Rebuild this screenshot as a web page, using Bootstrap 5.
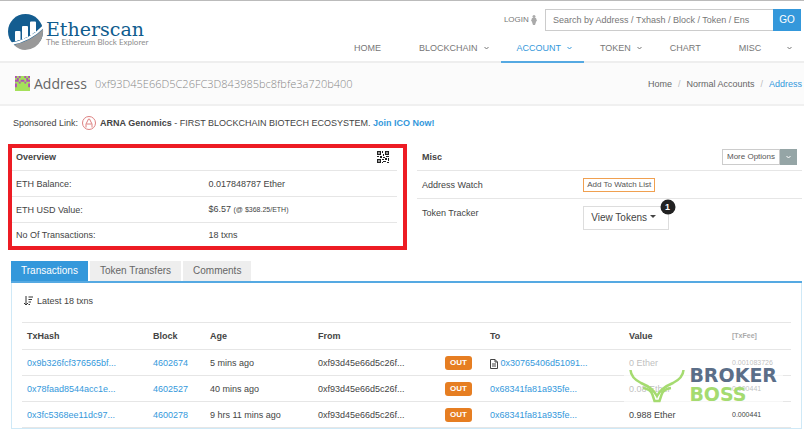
<!DOCTYPE html>
<html lang="en">
<head>
<meta charset="utf-8">
<meta name="viewport" content="width=device-width, initial-scale=1">
<title>Etherscan - Address</title>
<link rel="stylesheet" href="https://cdn.jsdelivr.net/npm/bootstrap@5.3.0/dist/css/bootstrap.min.css">
<style>
body{font-family:"Liberation Sans",Arial,sans-serif;font-size:9px;line-height:14px;color:#444;background:#fff;overflow-x:hidden}
a{color:#3498db;text-decoration:none}
.site-head{border-top:1px solid #bbb;border-bottom:2px solid #eee;min-height:63px}
.brand-text{padding:11px 0 0 2px}
.brand-name{font:19px/18px "DejaVu Serif",serif;color:#0f5c8e}
.brand-tag{font:8px/8px Lato,sans-serif;color:#8c8c8c}
.head-side{width:466px}
.head-tools{padding:8px 3px 0 0}
.login{color:#777;font-size:8px}
.search{width:256px}
.search input{font-size:9px;line-height:14px;height:22px;padding:0 7px;border:1px solid #ccc;border-radius:0;color:#777}
.search input::placeholder{color:#777;opacity:1}
.go{font-size:10px;line-height:14px;width:28px;padding:0;background:#3498db;color:#fff;border-radius:0}
.menu a{font-size:9px;line-height:14px;color:#777;padding:9px 12px 6px 16px;border-bottom:2px solid transparent;margin-bottom:-2px;display:flex;align-items:center;gap:6px}
.menu .plain{padding-right:22px}
.menu a.current{color:#3498db;border-color:#55a9e2}
.strip{background:#fbfbfb;border-bottom:2px solid #f0f0f0;min-height:43px;padding:0 2px 0 15px}
.strip h1{font:14px/20px "Open Sans",sans-serif;color:#666}
.strip .hash{font:300 11px/20px "Open Sans",sans-serif;color:#888}
.crumbs a{color:#666}
.crumbs .breadcrumb-item+.breadcrumb-item{padding-left:6px}
.crumbs .breadcrumb-item+.breadcrumb-item::before{padding-right:6px;color:#bbb}
.crumbs .active{color:#3498db}
.sponsor{padding:10px 13px 14px}
.summary{padding-left:8px;padding-right:2px}
.overview{border:4px solid #ed1c24;padding-right:6px;margin-right:-2px}
.line{border-top:1px solid #e6e6e6;min-height:26px;padding:0 4px}
.overview .line:last-child{min-height:24px}
.overview .line.first{border-top:0;min-height:22px;padding-bottom:4px}
.misc{padding-left:12px}
.misc .line{min-height:28px;padding:0 5px}
.misc .line.first{border-top:0;min-height:26px}
.misc .line.tracker{padding-top:7px}
.misc-label{width:43%}
.tiny{font-size:7px}
.opt{font-size:8px;line-height:12px;padding:1px 4px;border:1px solid #ccc;border-radius:0;color:#555;background:#fff}
.opt-arrow{background:#95a5a6;border-color:#95a5a6;width:17px}
.watch{border:1px solid #f0a050;border-radius:0;font-size:8px;line-height:12px;padding:0 3px;color:#555;background:#fff}
.tokens{border:1px solid #ddd;border-radius:0;font-size:10px;line-height:14px;padding:4px 12px 4px 7px;color:#444;background:#fff}
.count{font-size:9px;line-height:15px;width:15px;height:15px;padding:0;background:#222}
.history{padding:11px 2px 0 11px}
.tabs{border-bottom:2px solid #55a9e2;gap:2px}
.tabs .nav-link{border:0;border-radius:0;font-size:10px;line-height:14px;padding:3px 10px;color:#666;background:#eee}
.tabs .nav-link.active{background:#3498db;color:#fff}
.panel{border:1px solid #cfe9f7;border-top:0;padding:11px 10px 0}
.latest{padding-left:2px;margin-bottom:14px}
.tx{table-layout:fixed;font-size:9px;line-height:14px;margin:0}
.tx th,.tx td{padding:6px 0 5px 5px;border:0;border-top:1px solid #e6e6e6;border-bottom:1px solid #e6e6e6;white-space:nowrap;color:#444;background:transparent;overflow:hidden}
.tx th{padding-bottom:6px}
.w-hash{width:126px}.w-block{width:57px}.w-age{width:108px}.w-from{width:127px}.w-dir{width:45px}.w-to{width:139px}.w-val{width:103px}
.tx .fee{font-size:7px}
.tx th.fee{color:#aaa}
.out{font-size:8px;line-height:14px;padding:0 5px;border-radius:3px;background:#e67e22;vertical-align:top}
.boss{top:72px;right:18px;background:rgba(255,255,255,.65);padding:11px 6px 0 5px;gap:4px;font:700 19px/19px "DejaVu Sans",sans-serif}
.boss svg{margin-top:3px}
.navy{color:#5b6e88}
.lime{color:#a5db70}
</style>
</head>
<body>
<header class="site-head d-flex justify-content-between">
  <a href="#" class="d-flex align-items-start ps-2 pt-2">
    <svg class="mt-1" width="36" height="38" viewBox="0 0 36 38"><circle cx="17.500" cy="18.500" r="17.500" fill="#145d90"/><path d="M6 32Q25 27 35 16Q36 27 27 34Q15 41 6 32" fill="#999"/><path d="M2 31Q22 28 36 13" stroke="#fff" stroke-width="2.500" fill="none"/><path d="M8 28V19h3.500v8M15 26V14h4v10M23 22V9.500h4V19" stroke="#fff" fill="#fff" stroke-width="2" stroke-linejoin="round"/></svg>
    <span class="brand-text"><span class="brand-name d-block">Etherscan</span><span class="brand-tag d-block">The Ethereum Block Explorer</span></span>
  </a>
  <div class="head-side d-flex flex-column justify-content-between">
    <div class="head-tools d-flex justify-content-end align-items-center">
      <a href="#" class="login me-2">LOGIN <svg width="6" height="10" viewBox="0 0 6 10" fill="#aaa"><circle cx="3" cy="1.500" r="1.500"/><path d="M1 3h4l1 3-1 .5V7L4 10H2L1 7V6.500L0 6z"/></svg></a>
      <form class="search input-group flex-nowrap"><input class="form-control" type="text" aria-label="Search" placeholder="Search by Address / Txhash / Block / Token / Ens"><button class="btn go" type="button">GO</button></form>
    </div>
    <nav class="menu d-flex">
      <a href="#" class="plain">HOME</a>
      <a href="#">BLOCKCHAIN <svg width="5" height="4" viewBox="0 0 5 4"><path d="M.5 1l2 2 2-2" stroke="currentColor" fill="none"/></svg></a>
      <a href="#" class="current">ACCOUNT <svg width="5" height="4" viewBox="0 0 5 4"><path d="M.5 1l2 2 2-2" stroke="currentColor" fill="none"/></svg></a>
      <a href="#">TOKEN <svg width="5" height="4" viewBox="0 0 5 4"><path d="M.5 1l2 2 2-2" stroke="currentColor" fill="none"/></svg></a>
      <a href="#" class="plain">CHART</a>
      <a href="#" class="flex-grow-1 justify-content-between">MISC <svg width="5" height="4" viewBox="0 0 5 4"><path d="M.5 1l2 2 2-2" stroke="currentColor" fill="none"/></svg></a>
    </nav>
  </div>
</header>
<section class="strip d-flex align-items-center justify-content-between">
  <div class="d-flex align-items-center">
    <svg width="15" height="15" viewBox="0 0 8 8"><path d="M0 0h8v8H0z" fill="#a5e05a"/><path d="M0 0h1v1H0zM2 0h1v1H2zM5 0h1v1H5zM7 0h1v1H7zM0 2h2v1H0zM6 2h2v1H6zM1 1h1v1H1zM6 1h1v1H6zM3 2h2v1H3zM0 4h1v2H0zM7 4h1v2H7zM2 3h1v1H2zM5 3h1v1H5z" fill="#b04fb8"/></svg>
    <h1 class="m-0 ms-1">Address</h1><span class="hash ms-2">0xf93D45E66D5C26FC3D843985bc8fbfe3a720b400</span>
  </div>
  <nav aria-label="breadcrumb"><ol class="breadcrumb crumbs m-0"><li class="breadcrumb-item"><a href="#">Home</a></li><li class="breadcrumb-item"><a href="#">Normal Accounts</a></li><li class="breadcrumb-item active">Address</li></ol></nav>
</section>
<main>
  <div class="sponsor d-flex align-items-center">Sponsored Link:
    <svg class="mx-1" width="14" height="14" viewBox="0 0 14 14" fill="none" stroke="#dd8080"><circle cx="7" cy="7" r="6.500"/><path d="M4 11.500V8l2.500-5h1L10 8v3.500M4.500 8h5"/></svg>
    <span><b>ARNA Genomics</b> - FIRST BLOCKCHAIN BIOTECH ECOSYSTEM. <a href="#"><b>Join ICO Now!</b></a></span></div>
  <div class="summary row g-0">
    <div class="col-6"><div class="overview">
      <div class="line first d-flex align-items-center justify-content-between"><b>Overview</b><svg class="me-1" width="12" height="12" viewBox="0 0 12 12" fill="#222"><path d="M0 0h4v4H0zM8 0h4v4H8zM0 8h4v4H0zM5 0h1v2H5zM6 3h1v2H6zM0 5h2v1H0zM3 5h2v2H3zM6 6h2v1H6zM9 5h3v1H9zM8 7h2v2H8zM11 7h1v3h-1zM5 8h2v1H5zM6 10h3v1H6zM5 11h1v1H5zM10 11h2v1h-2z"/><path d="M1 1h2v2H1zM9 1h2v2H9zM1 9h2v2H1z" fill="#999"/></svg></div>
      <div class="line d-flex align-items-center"><span class="col-6">ETH Balance:</span><span class="ps-1">0.017848787 Ether</span></div>
      <div class="line d-flex align-items-center"><span class="col-6">ETH USD Value:</span><span class="ps-1">$6.57 <span class="tiny">(@ $368.25/ETH)</span></span></div>
      <div class="line d-flex align-items-center"><span class="col-6">No Of Transactions:</span><span class="ps-1">18 txns</span></div>
    </div></div>
    <div class="col-6 misc">
      <div class="line first d-flex align-items-center justify-content-between"><b>Misc</b><span class="d-flex"><button class="btn opt" type="button">More Options</button><button class="btn opt opt-arrow" type="button" aria-label="Toggle"><svg width="5" height="4" viewBox="0 0 5 4"><path d="M.5 1l2 2 2-2" stroke="#fff" fill="none"/></svg></button></span></div>
      <div class="line d-flex align-items-center"><span class="misc-label">Address Watch</span><button class="btn watch" type="button">Add To Watch List</button></div>
      <div class="line tracker d-flex align-items-start"><span class="misc-label">Token Tracker</span><button class="btn tokens position-relative dropdown-toggle" type="button">View Tokens<span class="count badge rounded-circle position-absolute top-0 start-100 translate-middle">1</span></button></div>
    </div>
  </div>
  <div class="history">
    <ul class="nav tabs"><li><a class="nav-link active" href="#">Transactions</a></li><li><a class="nav-link" href="#">Token Transfers</a></li><li><a class="nav-link" href="#">Comments</a></li></ul>
    <div class="panel position-relative">
      <div class="latest d-flex align-items-center"><svg class="me-1" width="9" height="10" viewBox="0 0 9 10" stroke="#333" fill="none"><path d="M2 0v9M0 7l2 2 2-2M4.500 1h4.500M4.500 3.500h3.500M4.500 6h2.500M4.500 8.500h1.500"/></svg>Latest 18 txns</div>
      <table class="table tx">
        <colgroup><col class="w-hash"><col class="w-block"><col class="w-age"><col class="w-from"><col class="w-dir"><col class="w-to"><col class="w-val"><col></colgroup>
        <thead><tr><th>TxHash</th><th>Block</th><th>Age</th><th>From</th><th></th><th>To</th><th>Value</th><th class="fee">[TxFee]</th></tr></thead>
        <tbody>
          <tr><td><a href="#">0x9b326fcf376565bf...</a></td><td><a href="#">4602674</a></td><td>5 mins ago</td><td>0xf93d45e66d5c26f...</td><td><span class="badge out">OUT</span></td><td><svg width="8" height="10" viewBox="0 0 8 10" fill="none" stroke="#444"><path d="M.5.5h4.500L7.500 3v6.500h-7zM5 .5V3h2.500M2 5h4M2 7h4"/></svg> <a href="#">0x30765406d51091...</a></td><td>0 Ether</td><td class="fee">0.001083726</td></tr>
          <tr><td><a href="#">0x78faad8544acc1e...</a></td><td><a href="#">4602527</a></td><td>40 mins ago</td><td>0xf93d45e66d5c26f...</td><td><span class="badge out">OUT</span></td><td><a href="#">0x68341fa81a935fe...</a></td><td>0.08 Ether</td><td class="fee">0.000441</td></tr>
          <tr><td><a href="#">0x3fc5368ee11dc97...</a></td><td><a href="#">4600278</a></td><td>9 hrs 11 mins ago</td><td>0xf93d45e66d5c26f...</td><td><span class="badge out">OUT</span></td><td><a href="#">0x68341fa81a935fe...</a></td><td>0.988 Ether</td><td class="fee">0.000441</td></tr>
        </tbody>
      </table>
      <div class="boss position-absolute d-flex align-items-start">
        <svg width="56" height="34" viewBox="0 0 56 34" fill="none" stroke="#a5db70" stroke-width="2.500"><path d="M1.500 1Q2 9 12 14Q24 19 28 27Q32 19 44 14Q54 9 54.500 1"/><path d="M14 19Q22 20 23.500 26L25.500 32h5L32.500 26Q34 20 42 19"/></svg>
        <div><div class="navy">BROKER</div><div class="lime">BOSS</div></div>
      </div>
    </div>
  </div>
</main>
<script src="https://cdn.jsdelivr.net/npm/bootstrap@5.3.0/dist/js/bootstrap.bundle.min.js"></script>
</body>
</html>
